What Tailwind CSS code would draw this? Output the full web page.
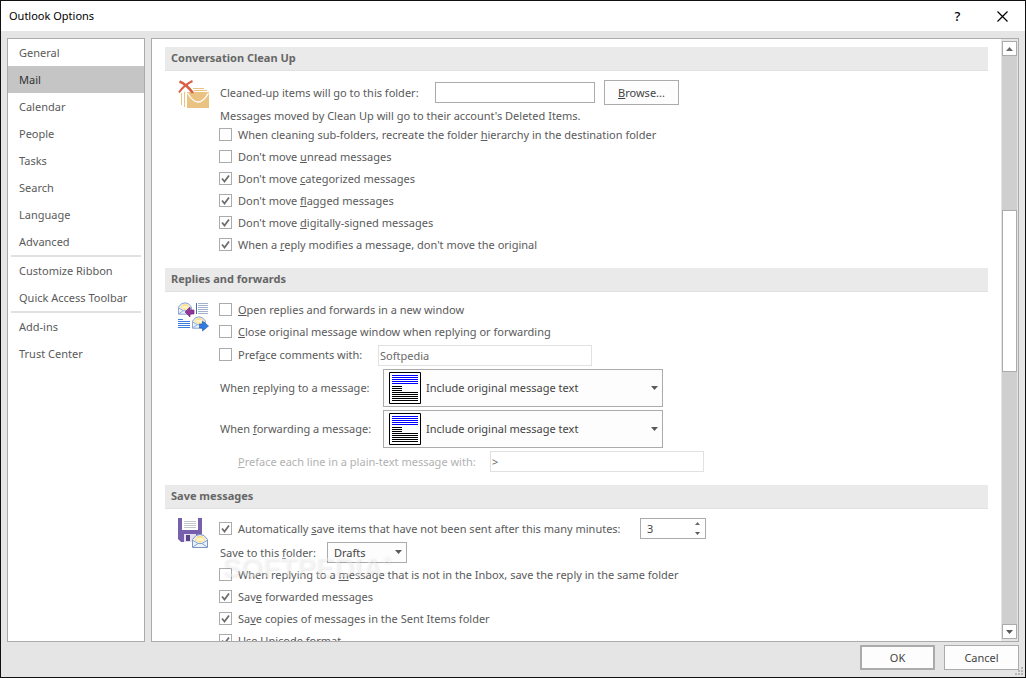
<!DOCTYPE html>
<html lang="en">
  <head>
    <meta charset="UTF-8" />
    <meta name="viewport" content="width=device-width, initial-scale=1.0" />
    <script src="https://cdn.jsdelivr.net/npm/@tailwindcss/browser@4"></script>
    <title>Outlook Options</title>
  </head>

  <body class="bg-white">
    <!-- Shared symbols -->
    <svg class="hidden">
      <symbol id="check" viewBox="0 0 13 13">
        <path d="M3 6.500 5.500 9.500 10 3.500" fill="none" stroke="#6e6e6e" stroke-width="1.8" />
      </symbol>
      <symbol id="down" viewBox="0 0 7 4"><path d="M0 0h7L3.5 4z" fill="#5a5a5a" /></symbol>
      <symbol id="up" viewBox="0 0 7 4"><path d="M0 4h7L3.5 0z" fill="#6a6a6a" /></symbol>
      <symbol id="page" viewBox="0 0 32 32">
        <path d="M.5.5h31v31H.5z" fill="#fff" stroke="#000" />
        <path d="M3 3.5h26M3 5.5h26M3 7.5h26M3 9.5h26M3 11.5h26" stroke="#00f" />
        <path d="M3 14.5h10M3 16.5h10M3 18.5h10M3 20.5h26M3 22.5h26M3 24.5h26M3 26.5h26M3 28.5h26" stroke="#000" />
      </symbol>
      <symbol id="letter" viewBox="0 0 16 14">
        <path d="M.5 5.5 4 1.5Q8-.5 12 1.5L15.500 5.500V13.500H.5z" fill="#e9f1fb" stroke="#7f96c4" />
        <path d="M2.500 6 5 2.500Q8 1 11 2.500L13.500 6 8 9z" fill="#ffe08a" />
        <path d="M4 4.500Q8 3 12 4.500L11 7H5z" fill="#fff3c8" />
        <path d="M1 6.500 6 9.500H10L15 6.500M1 13 6 9.500M15 13 10 9.500" fill="none" stroke="#86a4d2" />
      </symbol>
    </svg>

    <div class="relative flex h-screen w-full flex-col overflow-hidden border border-[#111] bg-[#e5e5e5] font-['Noto_Sans','Open_Sans',sans-serif] text-[11px] leading-[14px] text-[#5a5a5a]">
      <!-- Title bar -->
      <header class="flex h-[30px] shrink-0 items-center bg-white pl-2 text-black">
        <h1 class="flex-1">Outlook Options</h1>
        <button aria-label="Help" class="h-full w-[45px] text-[13px] font-medium">?</button>
        <button aria-label="Close" class="flex h-full w-[45px] items-center justify-center">
          <svg class="size-[11px]" viewBox="0 0 11 11"><path d="M.5.5l10 10M10.500.5l-10 10" stroke="#000" stroke-width="1.2" /></svg>
        </button>
      </header>

      <div class="flex min-h-0 flex-1 gap-[6px] px-[6px] pt-[7px]">
        <!-- Categories -->
        <nav class="w-[138px] shrink-0 border border-[#ababab] bg-white">
          <a href="#" class="block pl-[11px] leading-[27px]">General</a>
          <a href="#" class="block bg-[#c5c5c5] pl-[11px] leading-[27px] text-[#333]">Mail</a>
          <a href="#" class="block pl-[11px] leading-[27px]">Calendar</a>
          <a href="#" class="block pl-[11px] leading-[27px]">People</a>
          <a href="#" class="block pl-[11px] leading-[27px]">Tasks</a>
          <a href="#" class="block pl-[11px] leading-[27px]">Search</a>
          <a href="#" class="block pl-[11px] leading-[27px]">Language</a>
          <a href="#" class="block pl-[11px] leading-[27px]">Advanced</a>
          <hr class="mx-[3px] border-t-2 border-[#e1e1e3]" />
          <a href="#" class="block pl-[11px] leading-[27px] whitespace-nowrap">Customize Ribbon</a>
          <a href="#" class="block pl-[11px] leading-[27px] whitespace-nowrap">Quick Access Toolbar</a>
          <hr class="mx-[3px] border-t-2 border-[#e1e1e3]" />
          <a href="#" class="block pl-[11px] leading-[27px]">Add-ins</a>
          <a href="#" class="block pl-[11px] leading-[27px]">Trust Center</a>
        </nav>

        <main class="flex min-w-0 flex-1 border border-[#ababab] bg-white">
          <div class="min-w-0 flex-1 overflow-hidden px-[13px] pt-2 whitespace-nowrap">
            <!-- Conversation Clean Up -->
            <section class="pb-3">
              <h2 class="h-6 border-b border-[#e1e1e1] bg-[#eaeaea] pl-[6px] leading-[22px] font-bold text-[#666]">Conversation Clean Up</h2>
              <div class="flex pt-[9px]">
                <div class="w-[54px] shrink-0 pl-3">
                  <svg class="h-[30px] w-[32px]" viewBox="0 0 32 30">
                    <path d="M10 12h22v16H10z" fill="#eac282" />
                    <path d="M16 8.500h11M17 10.500h13M4.500 13v12M7.500 12v15" stroke="#eac282" />
                    <path d="M10.500 13Q21 31 31.500 13" fill="none" stroke="#fff" stroke-width="1.3" />
                    <path d="M2.500 1.500Q9 4 16 13" fill="none" stroke="#d95f43" stroke-width="2.600" />
                    <path d="M15.500 1Q7 5 2 12.500" fill="none" stroke="#d95f43" stroke-width="2" />
                  </svg>
                </div>
                <div>
                  <div class="flex h-[25px] items-center pl-px">
                    <label for="cleanup-folder" class="w-[215px]">Cleaned-up items will go to this folder:</label>
                    <input id="cleanup-folder" type="text" class="h-[21px] w-[160px] border border-[#ababab] bg-white" />
                    <button class="ml-[9px] h-[25px] w-[75px] border border-[#ababab] bg-[#fdfdfd] text-[#444]"><u>B</u>rowse...</button>
                  </div>
                  <p class="pt-1 pb-px pl-px">Messages moved by Clean Up will go to their account's Deleted Items.</p>
                  <label class="flex h-[22px] gap-[6px] pt-1">
                    <span class="relative size-[13px]">
                      <input type="checkbox" class="peer block size-[13px] appearance-none border border-[#ababab] bg-white" />
                      <svg class="absolute inset-0 hidden size-[13px] peer-checked:block"><use href="#check" /></svg>
                    </span>
                    <span>When cleaning sub-folders, recreate the folder <u>h</u>ierarchy in the destination folder</span>
                  </label>
                  <label class="flex h-[22px] gap-[6px] pt-1">
                    <span class="relative size-[13px]">
                      <input type="checkbox" class="peer block size-[13px] appearance-none border border-[#ababab] bg-white" />
                      <svg class="absolute inset-0 hidden size-[13px] peer-checked:block"><use href="#check" /></svg>
                    </span>
                    <span>Don't move <u>u</u>nread messages</span>
                  </label>
                  <label class="flex h-[22px] gap-[6px] pt-1">
                    <span class="relative size-[13px]">
                      <input type="checkbox" checked class="peer block size-[13px] appearance-none border border-[#ababab] bg-white" />
                      <svg class="absolute inset-0 hidden size-[13px] peer-checked:block"><use href="#check" /></svg>
                    </span>
                    <span>Don't move <u>c</u>ategorized messages</span>
                  </label>
                  <label class="flex h-[22px] gap-[6px] pt-1">
                    <span class="relative size-[13px]">
                      <input type="checkbox" checked class="peer block size-[13px] appearance-none border border-[#ababab] bg-white" />
                      <svg class="absolute inset-0 hidden size-[13px] peer-checked:block"><use href="#check" /></svg>
                    </span>
                    <span>Don't move <u>f</u>lagged messages</span>
                  </label>
                  <label class="flex h-[22px] gap-[6px] pt-1">
                    <span class="relative size-[13px]">
                      <input type="checkbox" checked class="peer block size-[13px] appearance-none border border-[#ababab] bg-white" />
                      <svg class="absolute inset-0 hidden size-[13px] peer-checked:block"><use href="#check" /></svg>
                    </span>
                    <span>Don't move <u>d</u>igitally-signed messages</span>
                  </label>
                  <label class="flex h-[22px] gap-[6px] pt-1">
                    <span class="relative size-[13px]">
                      <input type="checkbox" checked class="peer block size-[13px] appearance-none border border-[#ababab] bg-white" />
                      <svg class="absolute inset-0 hidden size-[13px] peer-checked:block"><use href="#check" /></svg>
                    </span>
                    <span>When a <u>r</u>eply modifies a message, don't move the original</span>
                  </label>
                </div>
              </div>
            </section>

            <!-- Replies and forwards -->
            <section class="pb-[13px]">
              <h2 class="h-6 border-b border-[#e1e1e1] bg-[#eaeaea] pl-[6px] leading-[22px] font-bold text-[#666]">Replies and forwards</h2>
              <div class="flex pt-[7px]">
                <div class="w-[54px] shrink-0 pt-[3px] pl-3">
                  <svg class="size-8" viewBox="0 0 32 32">
                    <use href="#letter" x="1" y="0" width="14" height="13" />
                    <path d="M8 10l5-5v3h4v4h-4v3z" fill="#93379b" stroke="#6d2376" stroke-width=".6" />
                    <path d="M19.500 1v11" stroke="#4a6db0" />
                    <path d="M21 1.500h10M21 3.500h10M21 5.500h10M21 7.500h10M21 9.500h10M21 11.500h10" stroke="#a3b1cc" />
                    <path d="M1 17.500h5M1 19.500h12M1 21.500h12M1 23.500h12M1 25.500h12" stroke="#3d7edb" />
                    <use href="#letter" x="15" y="14" width="14" height="13" />
                    <path d="M31.500 24l-6-5v3h-3v4h3v3z" fill="#2f7de0" stroke="#1c55ad" stroke-width=".6" />
                  </svg>
                </div>
                <div>
                  <label class="flex h-[22px] gap-[6px] pt-1">
                    <span class="relative size-[13px]">
                      <input type="checkbox" class="peer block size-[13px] appearance-none border border-[#ababab] bg-white" />
                      <svg class="absolute inset-0 hidden size-[13px] peer-checked:block"><use href="#check" /></svg>
                    </span>
                    <span><u>O</u>pen replies and forwards in a new window</span>
                  </label>
                  <label class="flex h-[22px] gap-[6px] pt-1">
                    <span class="relative size-[13px]">
                      <input type="checkbox" class="peer block size-[13px] appearance-none border border-[#ababab] bg-white" />
                      <svg class="absolute inset-0 hidden size-[13px] peer-checked:block"><use href="#check" /></svg>
                    </span>
                    <span><u>C</u>lose original message window when replying or forwarding</span>
                  </label>
                  <div class="flex h-6 items-center">
                    <label class="flex w-[159px] gap-[6px]">
                      <span class="relative size-[13px]">
                        <input type="checkbox" class="peer block size-[13px] appearance-none border border-[#ababab] bg-white" />
                        <svg class="absolute inset-0 hidden size-[13px] peer-checked:block"><use href="#check" /></svg>
                      </span>
                      <span>Pref<u>a</u>ce comments with:</span>
                    </label>
                    <input type="text" value="Softpedia" aria-label="Preface comments with" class="h-[21px] w-[214px] border border-[#e1e1e1] bg-white pl-px text-[#6a6a6a]" />
                  </div>
                  <div class="mt-[2px] flex flex-col gap-[3px]">
                    <div class="flex items-center pl-px">
                      <label for="replying" class="w-[163px]">When <u>r</u>eplying to a message:</label>
                      <div class="relative">
                        <select id="replying" class="h-[38px] w-[280px] appearance-none border border-[#ababab] bg-[#fdfdfd] pl-[42px] text-[#444]">
                          <option>Include original message text</option>
                        </select>
                        <svg class="pointer-events-none absolute top-[3px] left-[6px] size-8"><use href="#page" /></svg>
                        <svg class="pointer-events-none absolute top-[17px] right-[5px] h-1 w-[7px]"><use href="#down" /></svg>
                      </div>
                    </div>
                    <div class="flex items-center pl-px">
                      <label for="forwarding" class="w-[163px]">When <u>f</u>orwarding a message:</label>
                      <div class="relative">
                        <select id="forwarding" class="h-[38px] w-[280px] appearance-none border border-[#ababab] bg-[#fdfdfd] pl-[42px] text-[#444]">
                          <option>Include original message text</option>
                        </select>
                        <svg class="pointer-events-none absolute top-[3px] left-[6px] size-8"><use href="#page" /></svg>
                        <svg class="pointer-events-none absolute top-[17px] right-[5px] h-1 w-[7px]"><use href="#down" /></svg>
                      </div>
                    </div>
                    <div class="flex items-center pl-[19px]">
                      <label for="prefix" class="w-[252px] text-[#b1b1b1]"><u>P</u>reface each line in a plain-text message with:</label>
                      <input id="prefix" type="text" value="&gt;" class="h-[21px] w-[214px] border border-[#e1e1e1] bg-white pl-px text-[#6a6a6a]" />
                    </div>
                  </div>
                </div>
              </div>
            </section>

            <!-- Save messages -->
            <section>
              <h2 class="h-6 border-b border-[#e1e1e1] bg-[#eaeaea] pl-[6px] leading-[22px] font-bold text-[#666]">Save messages</h2>
              <div class="flex pt-[9px]">
                <div class="w-[54px] shrink-0 pl-3">
                  <svg class="size-8" viewBox="0 0 32 32">
                    <path d="M1 0h24v24H4l-3-3z" fill="#7660ae" />
                    <path d="M5 0h16v12H5z" fill="#fff" />
                    <path d="M7 3.500h12M7 5.500h12M7 7.500h12M7 9.500h12" stroke="#c4c4cc" />
                    <path d="M7 16h12v8H7z" fill="#e4e0ef" />
                    <path d="M9 17h4v6H9z" fill="#594488" />
                    <use href="#letter" x="15" y="16" width="16" height="14" />
                  </svg>
                </div>
                <div class="relative">
                  <div class="flex h-[21px] items-center">
                    <label class="flex w-[421px] gap-[6px]">
                      <span class="relative size-[13px]">
                        <input type="checkbox" checked class="peer block size-[13px] appearance-none border border-[#ababab] bg-white" />
                        <svg class="absolute inset-0 hidden size-[13px] peer-checked:block"><use href="#check" /></svg>
                      </span>
                      <span>Automatically <u>s</u>ave items that have not been sent after this many minutes:</span>
                    </label>
                    <div class="flex h-[21px] w-[66px] border border-[#ababab] bg-white">
                      <input type="text" value="3" aria-label="Minutes" class="min-w-0 flex-1 pl-[6px] text-[#444]" />
                      <div class="flex w-4 flex-col">
                        <button aria-label="Increase" class="flex flex-1 items-center justify-center"><svg class="h-[3px] w-[5px]"><use href="#up" /></svg></button>
                        <button aria-label="Decrease" class="flex flex-1 items-center justify-center"><svg class="h-[3px] w-[5px]"><use href="#down" /></svg></button>
                      </div>
                    </div>
                  </div>
                  <div class="mt-[3px] mb-px flex items-center pl-px">
                    <label for="save-folder" class="w-[107px]">Save to this <u>f</u>older:</label>
                    <div class="relative">
                      <select id="save-folder" class="block h-[21px] w-[80px] appearance-none border border-[#ababab] bg-[#fdfdfd] pl-[6px] text-[#444]">
                        <option>Drafts</option>
                      </select>
                      <svg class="pointer-events-none absolute top-2 right-[5px] h-1 w-[7px]"><use href="#down" /></svg>
                    </div>
                  </div>
                  <label class="flex h-[22px] gap-[6px] pt-1">
                    <span class="relative size-[13px]">
                      <input type="checkbox" class="peer block size-[13px] appearance-none border border-[#ababab] bg-white" />
                      <svg class="absolute inset-0 hidden size-[13px] peer-checked:block"><use href="#check" /></svg>
                    </span>
                    <span>When replying to a <u>m</u>essage that is not in the Inbox, save the reply in the same folder</span>
                  </label>
                  <label class="flex h-[22px] gap-[6px] pt-1">
                    <span class="relative size-[13px]">
                      <input type="checkbox" checked class="peer block size-[13px] appearance-none border border-[#ababab] bg-white" />
                      <svg class="absolute inset-0 hidden size-[13px] peer-checked:block"><use href="#check" /></svg>
                    </span>
                    <span>Sav<u>e</u> forwarded messages</span>
                  </label>
                  <label class="flex h-[22px] gap-[6px] pt-1">
                    <span class="relative size-[13px]">
                      <input type="checkbox" checked class="peer block size-[13px] appearance-none border border-[#ababab] bg-white" />
                      <svg class="absolute inset-0 hidden size-[13px] peer-checked:block"><use href="#check" /></svg>
                    </span>
                    <span>Sa<u>v</u>e copies of messages in the Sent Items folder</span>
                  </label>
                  <label class="flex h-[22px] gap-[6px] pt-1">
                    <span class="relative size-[13px]">
                      <input type="checkbox" checked class="peer block size-[13px] appearance-none border border-[#ababab] bg-white" />
                      <svg class="absolute inset-0 hidden size-[13px] peer-checked:block"><use href="#check" /></svg>
                    </span>
                    <span>Use Unicode format</span>
                  </label>
                  <!-- Watermark -->
                  <div class="pointer-events-none absolute top-[34px] left-[3px] flex font-['Liberation_Sans',sans-serif] text-[28px] leading-8 font-bold text-white/40 [text-shadow:1px_1px_2px_rgb(0_0_0/0.08)]">
                    SOFTPEDIA<span class="text-[12px] leading-4">®</span>
                  </div>
                </div>
              </div>
            </section>
          </div>

          <!-- Scroll bar -->
          <div class="flex w-[17px] shrink-0 flex-col border-x border-[#e5e5e5] bg-[#cfcfcf]">
            <div class="h-[2px] bg-[#e5e5e5]"></div>
            <button aria-label="Scroll up" class="flex h-[15px] items-center justify-center border border-[#ababab] bg-white"><svg class="h-1 w-[7px]"><use href="#up" /></svg></button>
            <div class="flex-[154]"></div>
            <div class="flex-[160] border border-[#ababab] bg-white"></div>
            <div class="flex-[252]"></div>
            <button aria-label="Scroll down" class="flex h-[15px] items-center justify-center border border-[#ababab] bg-white"><svg class="h-1 w-[7px]"><use href="#down" /></svg></button>
            <div class="h-[2px] bg-[#e5e5e5]"></div>
          </div>
        </main>
      </div>

      <footer class="flex shrink-0 justify-end gap-[9px] px-[6px] pt-[3px] pb-[7px] text-[#444]">
        <button class="h-[25px] w-[75px] border-2 border-[#ababab] bg-[#fdfdfd]">OK</button>
        <button class="h-[25px] w-[75px] border border-[#ababab] bg-[#fdfdfd]">Cancel</button>
      </footer>

      <svg class="absolute right-[2px] bottom-[2px] size-2" viewBox="0 0 8 8" fill="#b5b5b5">
        <path d="M6 0h2v2H6zM3 3h2v2H3zM6 3h2v2H6zM0 6h2v2H0zM3 6h2v2H3zM6 6h2v2H6z" />
      </svg>
    </div>
  </body>
</html>
